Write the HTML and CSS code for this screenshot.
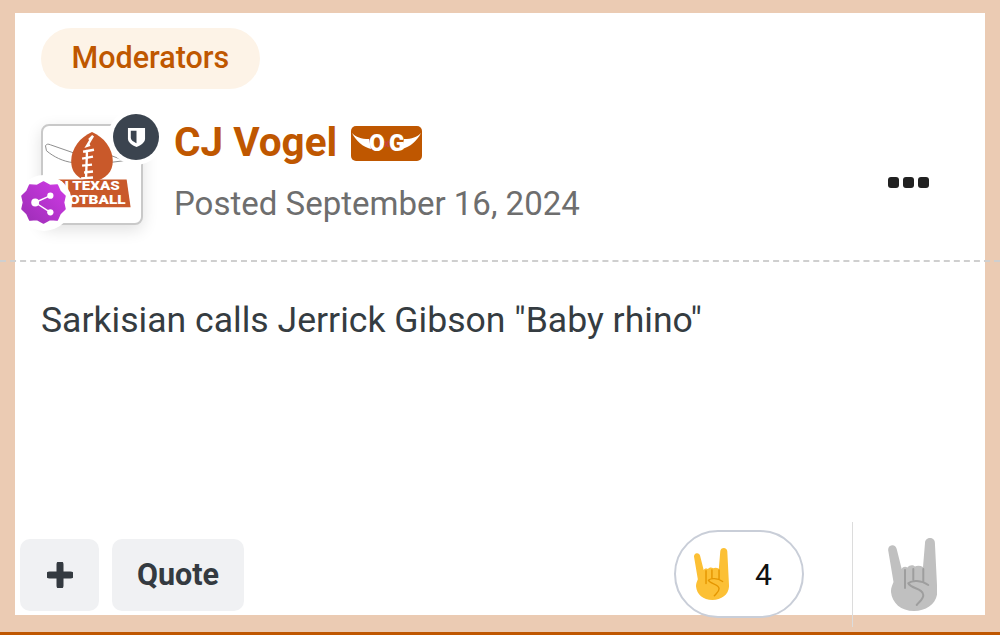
FILE: index.html
```html
<!DOCTYPE html>
<html lang="en">
<head>
<meta charset="utf-8">
<title>CJ Vogel post</title>
<link rel="stylesheet" href="styles.css">
</head>
<body>
<svg class="defs" width="0" height="0" aria-hidden="true">
  <symbol id="horns" viewBox="0 0 50 73">
    <path class="hand-fill" d="M1.300 13C.6 9.800 2.500 7.500 5 7.300c2.400-.2 4.100 1.200 4.700 3.700L14.700 31c1-2.300 3.500-2.800 5.800-1.500 1.700-2.500 5.500-3 7.500-1 2-1.200 5.500-1 8 .5L38 5c.1-3.400 2.500-5 5-5s4.900 1.700 4.900 5L50.300 53C50.500 65 40 73 27 73 14 73 5 65 4 54c-.3-4 1.500-7 2.500-10z"/>
    <path class="hand-line" d="M18 32L18 50M26.300 31L26.300 42M36.300 31L36.300 44M41.300 47C34 42 25 42 21.300 45.300 24 51 36 50 36.300 57 36.500 61 33 63 29.700 67"/>
  </symbol>
</svg>
<main class="page">
  <article class="card">
    <div class="group">Moderators</div>
    <header class="author">
      <div class="avatar">
        <svg class="logo" viewBox="0 0 98 98" aria-hidden="true">
          <path d="M2 20C3 18 5 18 7 19L30 27 30 37C20 36 10 31 3 25z" fill="#fff" stroke="#8d8d8d" stroke-width="1"/>
          <path d="M66 29L82 35 66 37z" fill="#fff" stroke="#8d8d8d" stroke-width="1"/>
          <path d="M49 6C61 11 70 23 70 35c0 11-6 18-21 22C33 53 28 46 28 35 28 23 37 11 49 6z" fill="#c9592a"/>
          <path d="M46 14L50 10 44 20 47 19M40 26L51 24M39 33L50 31M39 40L49 39M41 47L50 46M44 24L43 52M38 53L50 52" fill="none" stroke="#fff" stroke-width="2.400"/>
          <path d="M14 54H84L88 82H14z" fill="#c9592a"/>
          <text class="logo-text" x="15" y="65" textLength="62" lengthAdjust="spacingAndGlyphs">N TEXAS</text>
          <text class="logo-text" x="15" y="79" textLength="68" lengthAdjust="spacingAndGlyphs">OOTBALL</text>
        </svg>
        <span class="rank">
          <svg viewBox="0 0 20 22" aria-hidden="true"><path d="M1 1h18v11c0 4-4 7-9 9-5-2-9-5-9-9z" fill="#fff"/><path d="M4 4h6v13c-3-1.500-6-3-6-6z" fill="#3b444f"/></svg>
        </span>
        <span class="share">
          <svg viewBox="0 0 48 48" aria-hidden="true">
            <defs><linearGradient id="pg" x1="0" y1="1" x2="1" y2="0"><stop offset="0" stop-color="#9b2db5"/><stop offset="1" stop-color="#d03be6"/></linearGradient></defs>
            <path d="M24 3l6.500 3.500 7.500-.5 3 6.500 5 5-1.500 6.500 1.500 6.500-5 5-3 6.500-7.500-.5L24 45l-6.500-3.500-7.500.5-3-6.500-5-5L3.500 24 2 17.500l5-5L10 6l7.500.5z" fill="url(#pg)" stroke="url(#pg)" stroke-width="1.500" stroke-linejoin="round"/>
            <path d="M15.500 24L31 17M15.500 24L31 34" stroke="#fff" stroke-width="1.500"/>
            <circle cx="15.500" cy="24" r="4" fill="#fff"/><circle cx="31" cy="17" r="3.200" fill="#fff"/><circle cx="31" cy="34" r="3.200" fill="#fff"/>
          </svg>
        </span>
      </div>
      <div class="meta">
        <div class="name-row">
          <h2 class="name">CJ Vogel</h2>
          <span class="og"><svg class="og-horns" viewBox="0 0 71 35" aria-hidden="true"><path d="M1 7C5 11 10 13 18 13L20 23C12 21 5 15 1 7zM70 7C66 11 61 13 53 13L51 23C59 21 66 15 70 7z" fill="#fff"/><path d="M33.500 15l4 6M37.500 15l-4 6" stroke="#c8443c" stroke-width="1.500"/></svg><span class="og-text">OG</span></span>
        </div>
        <div class="posted">Posted September 16, 2024</div>
      </div>
      <div class="more"><i></i><i></i><i></i></div>
    </header>
    <div class="rule"></div>
    <p class="text">Sarkisian calls Jerrick Gibson "Baby rhino"</p>
    <footer class="actions">
      <button class="btn btn-plus"><svg viewBox="0 0 26 26" aria-hidden="true"><path d="M13 2.500v21M2.500 13h21" stroke="#343a40" stroke-width="7" stroke-linecap="round"/></svg></button>
      <button class="btn btn-quote">Quote</button>
      <div class="reaction">
        <svg class="hand hand-yellow" aria-hidden="true"><use href="#horns"/></svg>
        <span class="count">4</span>
      </div>
      <div class="react-side">
        <svg class="hand hand-gray" aria-hidden="true"><use href="#horns"/></svg>
      </div>
    </footer>
  </article>
</main>
</body>
</html>
```
FILE: styles.css
```css
* { box-sizing: border-box; }
html, body { margin: 0; padding: 0; }
body { width: 1000px; height: 635px; overflow: hidden; font-family: Roboto, "Liberation Sans", sans-serif; background: #ebcbb3; }
.defs { position: absolute; }
.hand-fill { fill: var(--hand); }
.hand-line { fill: none; stroke: var(--crease); stroke-width: 2; stroke-linecap: round; stroke-linejoin: round; }
.page { height: 635px; padding: 13px 15px 0; border-bottom: 3px solid #bf5700; }
.card { height: 602px; background: #fff; display: flex; flex-direction: column; }
.group { align-self: flex-start; margin: 15px 0 0 26px; height: 61px; padding: 0 30.500px 2px; display: flex; align-items: center; border-radius: 31px; background: #fdf3e7; color: #bf5700; font-size: 30.500px; font-weight: 500; }
.author { display: flex; align-items: flex-start; margin: 35px 56px 0 26px; height: 101px; }
.avatar { position: relative; width: 102px; height: 101px; flex: none; background: #fff; border: 2px solid #c9c9c9; border-radius: 8px; box-shadow: 0 5px 16px rgba(0,0,0,.12); }
.logo { display: block; width: 98px; height: 97px; }
.logo-text { font-family: Roboto, sans-serif; font-size: 12px; font-weight: 900; fill: #fff; }
.rank { position: absolute; top: -12px; right: -18px; width: 46px; height: 46px; border-radius: 50%; background: #3b444f; box-shadow: 0 0 0 5px #fff; display: flex; align-items: center; justify-content: center; }
.rank svg { width: 19px; height: 21px; }
.share { position: absolute; left: -24px; top: 52px; width: 50px; height: 50px; border-radius: 50%; background: #fff; box-shadow: 0 0 0 3px #fff; }
.share svg { display: block; width: 47px; height: 47px; margin: 1px; }
.meta { margin-left: 31px; flex: 1; }
.name-row { display: flex; align-items: center; gap: 14px; height: 36px; }
.name { margin: 0; font-size: 40.500px; font-weight: 700; color: #bf5700; line-height: 36px; }
.og { position: relative; width: 71px; height: 35px; background: #bf5700; border-radius: 5px; display: flex; align-items: center; justify-content: center; margin-top: 2px; }
.og-horns { position: absolute; inset: 0; width: 71px; height: 35px; }
.og-text { position: relative; color: #fff; font-size: 23px; font-weight: 900; letter-spacing: 4px; margin-right: -4px; }
.posted { margin-top: 25px; font-size: 33px; line-height: 38px; color: #6e6e6e; }
.more { display: flex; gap: 4px; margin-top: 53px; }
.more i { width: 11px; height: 11px; border-radius: 3px; background: #212121; }
.rule { margin: 35px -15px 0; border-top: 2px dashed #cfcfcf; height: 2px; }
.text { margin: 36px 26px 0; font-size: 35.600px; line-height: 44px; color: #353c41; }
.actions { margin-top: auto; display: flex; align-items: flex-start; padding-left: 5px; height: 76px; position: relative; }
.btn { border: 0; background: #f0f1f3; border-radius: 10px; height: 72px; color: #343a40; font-family: inherit; display: flex; align-items: center; justify-content: center; }
.btn-plus { width: 79px; }
.btn-plus svg { width: 26px; height: 26px; }
.btn-quote { width: 132px; margin-left: 13px; padding-bottom: 3px; font-size: 30.500px; font-weight: 700; }
.reaction { position: absolute; left: 659px; top: -9px; width: 130px; height: 88px; border: 2px solid #c9ced8; border-radius: 44px; background: #fff; display: flex; align-items: center; }
.hand { display: block; }
.hand-yellow { --hand: #fcc035; --crease: #e59600; width: 36px; height: 52px; margin-left: 17px; }
.count { margin-left: 26px; font-size: 30px; font-weight: 400; color: #111; }
.react-side { position: absolute; left: 837px; top: -17px; height: 105px; width: 120px; border-left: 1px solid #dcdcdc; padding: 16px 0 0 34px; }
.hand-gray { --hand: #c0c0c0; --crease: #9e9e9e; width: 50px; height: 73px; }
```
